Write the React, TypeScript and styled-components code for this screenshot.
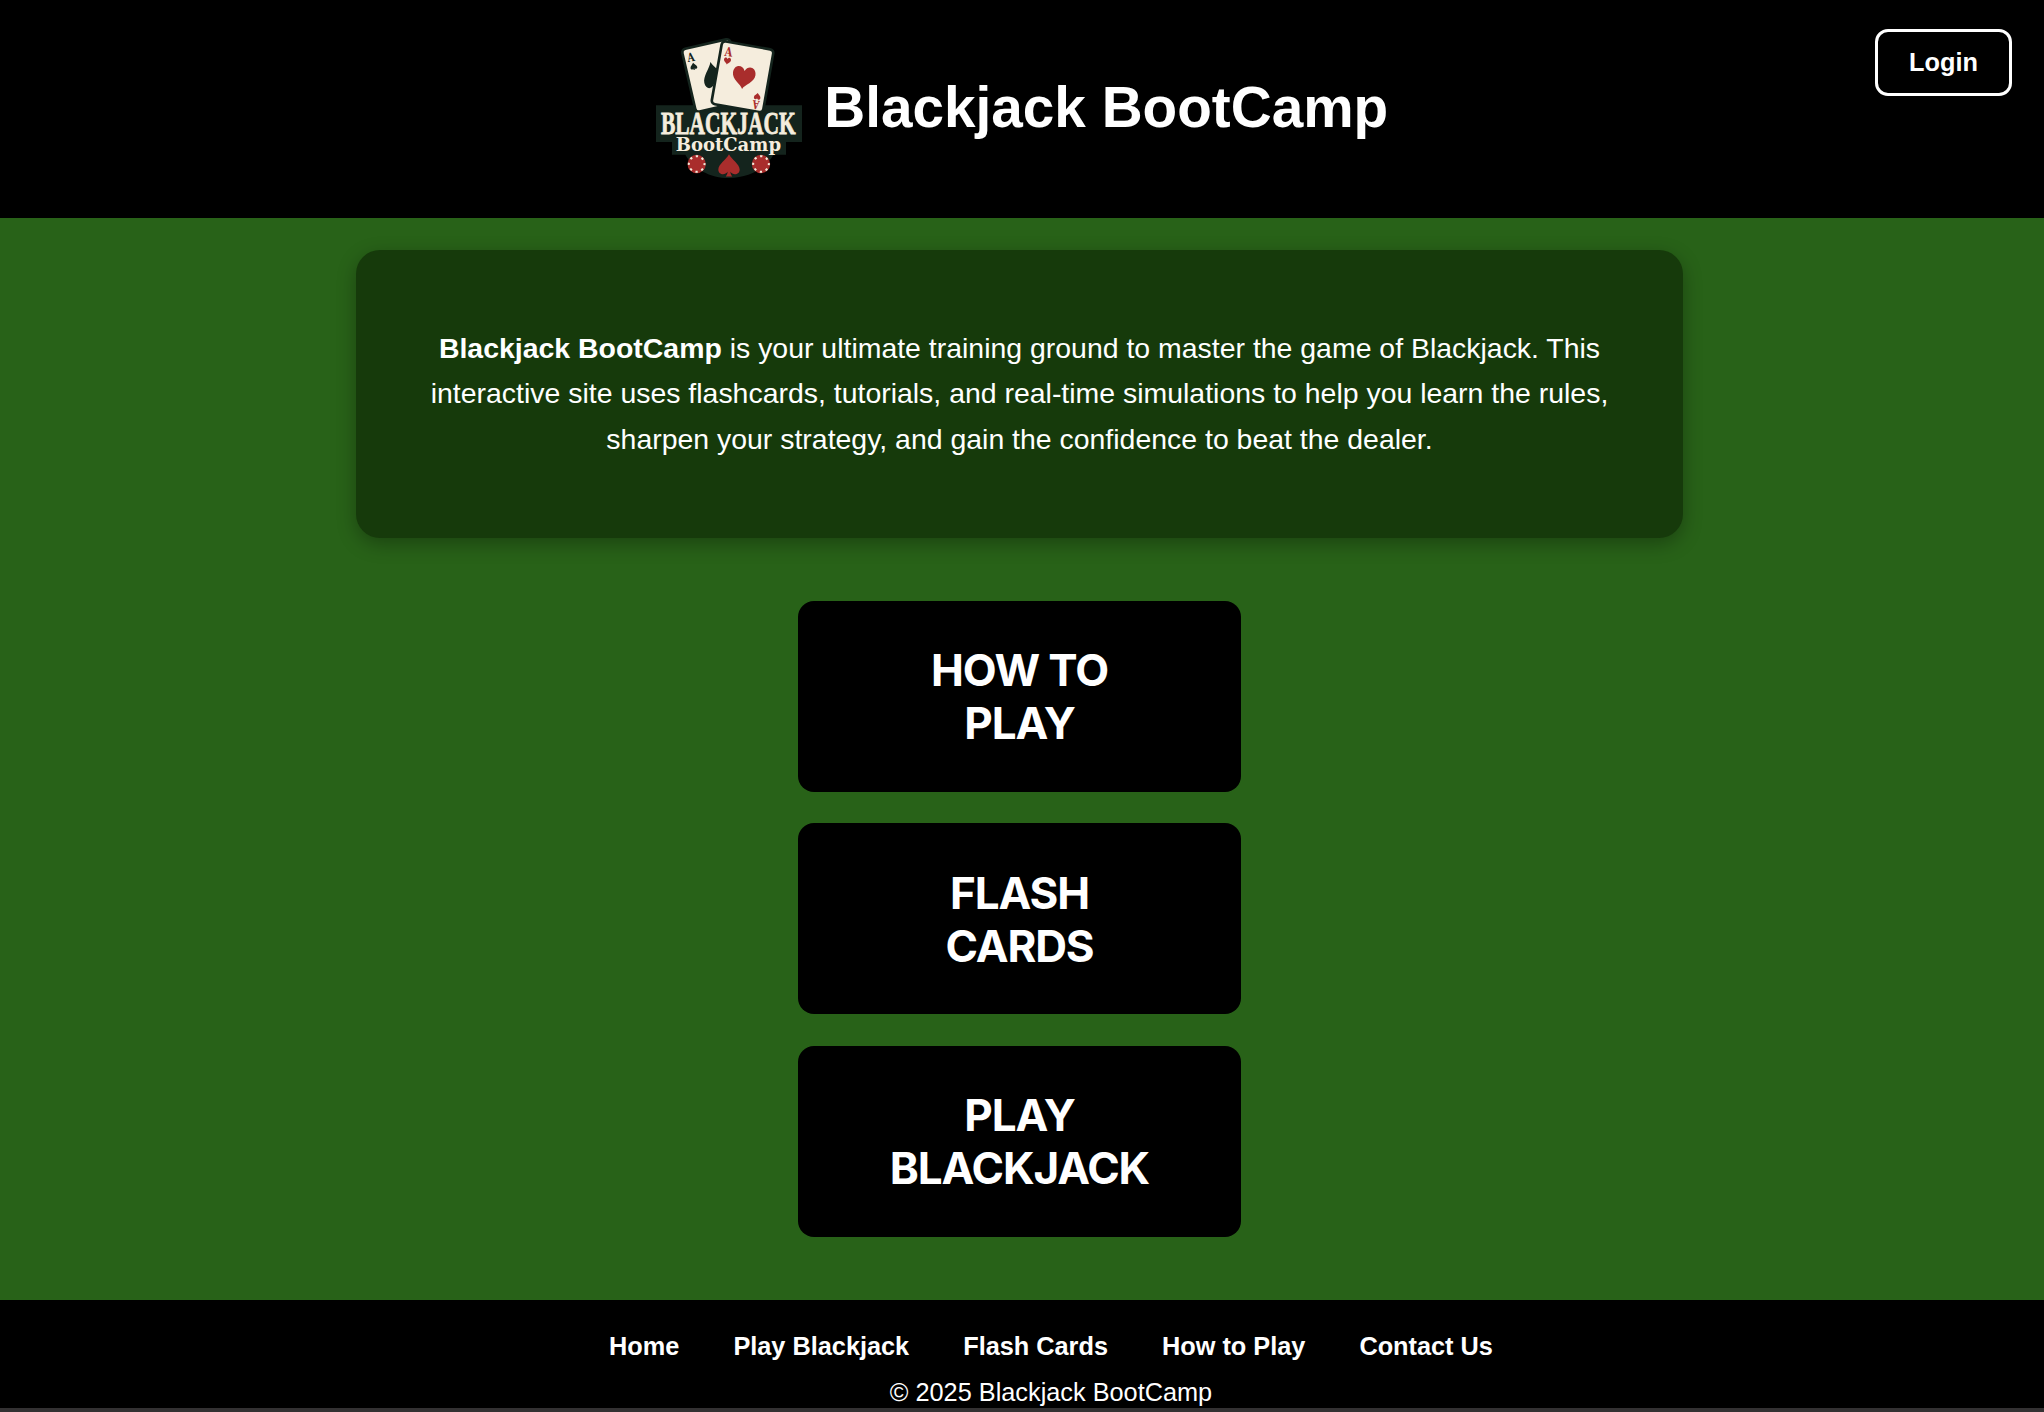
import React from "react";
import styled, { createGlobalStyle } from "styled-components";

const GlobalStyle = createGlobalStyle`
  *, *::before, *::after { box-sizing: border-box; }
  html, body { margin: 0; padding: 0; background: #333132; }
  body { font-family: "Liberation Sans", Arial, sans-serif; color: #fff; overflow: hidden; }
`;

const Page = styled.div`
  width: 2044px;
  height: 1412px;
  display: flex;
  flex-direction: column;
  background: #286218;
  border-bottom: 4px solid #333132;
`;

const Header = styled.header`
  position: relative;
  flex: none;
  height: 218px;
  padding: 0 2px 4px 0;
  background: #000;
  display: flex;
  justify-content: center;
  align-items: center;
  gap: 20.5px;
`;

const LogoArt = styled.svg`
  width: 150px;
  height: 150px;
  flex: none;
`;

const Title = styled.h1`
  margin: 0;
  padding-top: 2px;
  font-size: 56.7px;
  line-height: 66px;
  font-weight: 700;
  white-space: nowrap;
`;

const LoginButton = styled.button`
  position: absolute;
  top: 29px;
  right: 32px;
  width: 137px;
  height: 67px;
  padding: 0;
  border: 3px solid #fff;
  border-radius: 13px;
  background: #000;
  color: #fff;
  font: 700 25.3px/1 "Liberation Sans", Arial, sans-serif;
`;

const Main = styled.main`
  flex: 1;
  display: flex;
  flex-direction: column;
  align-items: center;
  padding: 32px 5px 0 0;
`;

const Intro = styled.section`
  width: 1327px;
  height: 288px;
  padding: 75.8px 64px 0;
  border-radius: 24px;
  background: #163a0b;
  box-shadow: 0 6px 19px rgba(0, 0, 0, 0.3);
  text-align: center;
`;

const IntroText = styled.p`
  margin: 0;
  font-size: 28.44px;
  line-height: 45.5px;
`;

const Menu = styled.nav`
  margin-top: 62.8px;
  display: flex;
  flex-direction: column;
  gap: 31.6px;
`;

const MenuButton = styled.button`
  width: 443px;
  height: 191px;
  padding: 2px 80px 0;
  border: 0;
  border-radius: 16px;
  background: #000;
  color: #fff;
  font: 700 44px/53px Inter, sans-serif;
  letter-spacing: -1.1px;
  text-transform: uppercase;
`;

const Footer = styled.footer`
  flex: none;
  height: 108px;
  padding: 31px 0 0 58px;
  background: #000;
  display: flex;
  flex-direction: column;
  align-items: center;
  font-size: 25.3px;
  line-height: 30px;
`;

const FooterLinks = styled.nav`
  display: flex;
  gap: 54px;
`;

const FooterLink = styled.a`
  color: #fff;
  font-weight: 700;
  text-decoration: none;
  white-space: nowrap;
`;

const Copyright = styled.p`
  margin: 16px 0 0;
  white-space: nowrap;
`;

const HEART = "M0 34 C-6 20 -34 10 -34 -12 C-34 -36 -8 -40 0 -20 C8 -40 34 -36 34 -12 C34 10 6 20 0 34Z";
const SPADE = "M0 -34 C8 -18 33 -4 33 13 C33 30 12 32 4 20 C5 27 7 31 10 34 L-10 34 C-7 31 -5 27 -4 20 C-12 32 -33 30 -33 13 C-33 -4 -8 -18 0 -34Z";

const CREAM = "#f5eddd";
const DARK = "#14241d";
const RED = "#a92d2c";
const SERIF = '"Liberation Serif", "Times New Roman", serif';
const SLAB = '"DejaVu Serif Condensed", "DejaVu Serif", serif';

const Chip = ({ x, y }: { x: number; y: number }) => (
  <g transform={`translate(${x} ${y})`}>
    <circle r="27.5" fill={RED} />
    <circle r="23.5" fill="none" stroke={CREAM} strokeWidth="6" strokeDasharray="7 11.46" strokeDashoffset="3.5" />
  </g>
);

const Logo = () => (
  <LogoArt viewBox="42 36 450 450" role="img" aria-label="Blackjack BootCamp">
    <path d="M48 256H486V366H438V404H400C378 446 326 474 268 474C210 474 158 446 136 404H96V366H48Z" fill={DARK} />
    <g transform="translate(217 164) rotate(-13)">
      <rect x="-73" y="-94" width="148" height="193" rx="11" fill={CREAM} stroke={DARK} strokeWidth="8" />
    </g>
    <text transform="translate(144 126) rotate(-10)" fontFamily={SLAB} fontWeight="700" fontSize="36" textLength="22" lengthAdjust="spacingAndGlyphs" fill={DARK}>A</text>
    <path d={SPADE} transform="translate(161 139) rotate(-10) scale(.31)" fill={DARK} />
    <path d={SPADE} transform="translate(220 167) rotate(-12) scale(.94 1.24)" fill={DARK} />
    <g transform="translate(308 171) rotate(10)">
      <rect x="-79" y="-96" width="157" height="191" rx="11" fill={CREAM} stroke={DARK} strokeWidth="8" />
    </g>
    <text transform="translate(253 107) rotate(7)" fontFamily={SLAB} fontWeight="700" fontSize="38" textLength="23" lengthAdjust="spacingAndGlyphs" fill={RED}>A</text>
    <path d={HEART} transform="translate(262 123) rotate(8) scale(.31)" fill={RED} />
    <path d={HEART} transform="translate(311 173) rotate(8)" fill={RED} />
    <path d={HEART} transform="translate(352 229) rotate(188) scale(.29)" fill={RED} />
    <text transform="translate(359 243) rotate(188)" fontFamily={SLAB} fontWeight="700" fontSize="36" textLength="20" lengthAdjust="spacingAndGlyphs" fill={RED}>A</text>
    <text x="63" y="342" fontFamily={SERIF} fontWeight="700" fontSize="92" textLength="404" lengthAdjust="spacingAndGlyphs" fill={CREAM} stroke={CREAM} strokeWidth="2.4">BLACKJACK</text>
    <text x="107" y="392" fontFamily={SLAB} fontWeight="700" fontSize="54" textLength="316" lengthAdjust="spacingAndGlyphs" fill={CREAM}>BootCamp</text>
    <Chip x={170} y={432} />
    <Chip x={363} y={432} />
    <path d={SPADE} transform="translate(267 436) scale(.97 .98)" fill={RED} />
  </LogoArt>
);

const menuItems = [["How to", "Play"], ["Flash", "Cards"], ["Play", "Blackjack"]];
const footerItems = ["Home", "Play Blackjack", "Flash Cards", "How to Play", "Contact Us"];

export default function App() {
  return (
    <>
      <GlobalStyle />
      <Page>
        <Header>
          <Logo />
          <Title>Blackjack BootCamp</Title>
          <LoginButton>Login</LoginButton>
        </Header>
        <Main>
          <Intro>
            <IntroText>
              <strong>Blackjack BootCamp</strong> is your ultimate training ground to master the game of Blackjack. This
              <br />
              interactive site uses flashcards, tutorials, and real-time simulations to help you learn the rules,
              <br />
              sharpen your strategy, and gain the confidence to beat the dealer.
            </IntroText>
          </Intro>
          <Menu>
            {menuItems.map(([first, second]) => (
              <MenuButton key={first + second}>
                {first}
                <br />
                {second}
              </MenuButton>
            ))}
          </Menu>
        </Main>
        <Footer>
          <FooterLinks>
            {footerItems.map((label) => (
              <FooterLink key={label}>{label}</FooterLink>
            ))}
          </FooterLinks>
          <Copyright>© 2025 Blackjack BootCamp</Copyright>
        </Footer>
      </Page>
    </>
  );
}
